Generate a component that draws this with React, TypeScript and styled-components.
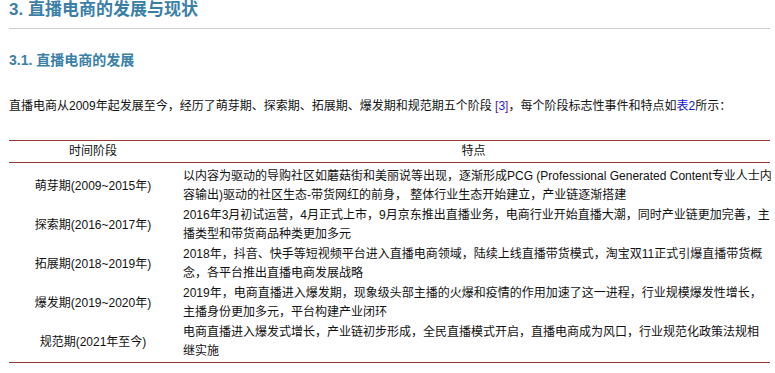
import React from 'react'
import styled, { createGlobalStyle } from 'styled-components'

const GlobalStyle = createGlobalStyle`
    body {
        margin: 0;
        background: #fff;
        font-family: "Liberation Sans", "Noto Sans CJK SC", sans-serif;
        color: #111;
    }
`

const Page = styled.div`
    padding: 1px 5px 0 9px;
`

const Title = styled.h1`
    margin: 0;
    font-size: 17px;
    line-height: 18px;
    font-weight: bold;
    color: #3a7fa8;
    padding-bottom: 9px;
    border-bottom: 1px solid #cccccc;
`

const Subtitle = styled.h2`
    margin: 21px 0 0;
    font-size: 14px;
    line-height: 20px;
    font-weight: bold;
    color: #3a7fa8;
`

const Intro = styled.p`
    margin: 26px 0 0;
    font-size: 12px;
    line-height: 20px;
    white-space: nowrap;
`

const Ref = styled.span`
    color: #5a1a8b;

    b {
        font-weight: normal;
        color: #1a1aee;
    }
`

const TableLink = styled.span`
    color: #1010d0;
`

const Table = styled.table`
    margin-top: 24px;
    width: 100%;
    table-layout: fixed;
    border-collapse: collapse;
    border-top: 1px solid #953735;
    border-bottom: 1px solid #953735;
    font-size: 12px;
    line-height: 19px;
`

const HeadCell = styled.th`
    font-weight: normal;
    text-align: center;
    padding: 1px 0 1px;
    border-bottom: 1px solid #953735;
`

const PeriodCell = styled.td<{ $first?: boolean }>`
    text-align: center;
    vertical-align: middle;
    white-space: nowrap;
    padding: ${(p) => (p.$first ? '4px' : '0')} 0 1px;
`

const DetailCell = styled.td<{ $first?: boolean }>`
    vertical-align: top;
    padding: ${(p) => (p.$first ? '4px' : '0')} 0 1px 6px;
`

const Line = styled.span`
    display: block;
    white-space: nowrap;
`

const stages = [
    {
        period: '萌芽期(2009~2015年)',
        lines: [
            '以内容为驱动的导购社区如蘑菇街和美丽说等出现，逐渐形成PCG (Professional Generated Content专业人士内',
            '容输出)驱动的社区生态-带货网红的前身， 整体行业生态开始建立，产业链逐渐搭建',
        ],
    },
    {
        period: '探索期(2016~2017年)',
        lines: [
            '2016年3月初试运营，4月正式上市，9月京东推出直播业务，电商行业开始直播大潮，同时产业链更加完善，主',
            '播类型和带货商品种类更加多元',
        ],
    },
    {
        period: '拓展期(2018~2019年)',
        lines: [
            '2018年，抖音、快手等短视频平台进入直播电商领域，陆续上线直播带货模式，淘宝双11正式引爆直播带货概',
            '念，各平台推出直播电商发展战略',
        ],
    },
    {
        period: '爆发期(2019~2020年)',
        lines: [
            '2019年，电商直播进入爆发期，现象级头部主播的火爆和疫情的作用加速了这一进程，行业规模爆发性增长，',
            '主播身份更加多元，平台构建产业闭环',
        ],
    },
    {
        period: '规范期(2021年至今)',
        lines: [
            '电商直播进入爆发式增长，产业链初步形成，全民直播模式开启，直播电商成为风口，行业规范化政策法规相',
            '继实施',
        ],
    },
]

export default function App() {
    return (
        <Page>
            <GlobalStyle />
            <Title>3. 直播电商的发展与现状</Title>
            <Subtitle>3.1. 直播电商的发展</Subtitle>
            <Intro>
                直播电商从2009年起发展至今，经历了萌芽期、探索期、拓展期、爆发期和规范期五个阶段{' '}
                <Ref>
                    [<b>3</b>]
                </Ref>
                ，每个阶段标志性事件和特点如<TableLink>表2</TableLink>所示：
            </Intro>
            <Table>
                <colgroup>
                    <col style={{ width: 168 }} />
                    <col />
                </colgroup>
                <thead>
                    <tr>
                        <HeadCell>时间阶段</HeadCell>
                        <HeadCell>特点</HeadCell>
                    </tr>
                </thead>
                <tbody>
                    {stages.map((s, i) => (
                        <tr key={s.period}>
                            <PeriodCell $first={i === 0}>{s.period}</PeriodCell>
                            <DetailCell $first={i === 0}>
                                {s.lines.map((l) => (
                                    <Line key={l}>{l}</Line>
                                ))}
                            </DetailCell>
                        </tr>
                    ))}
                </tbody>
            </Table>
        </Page>
    )
}
